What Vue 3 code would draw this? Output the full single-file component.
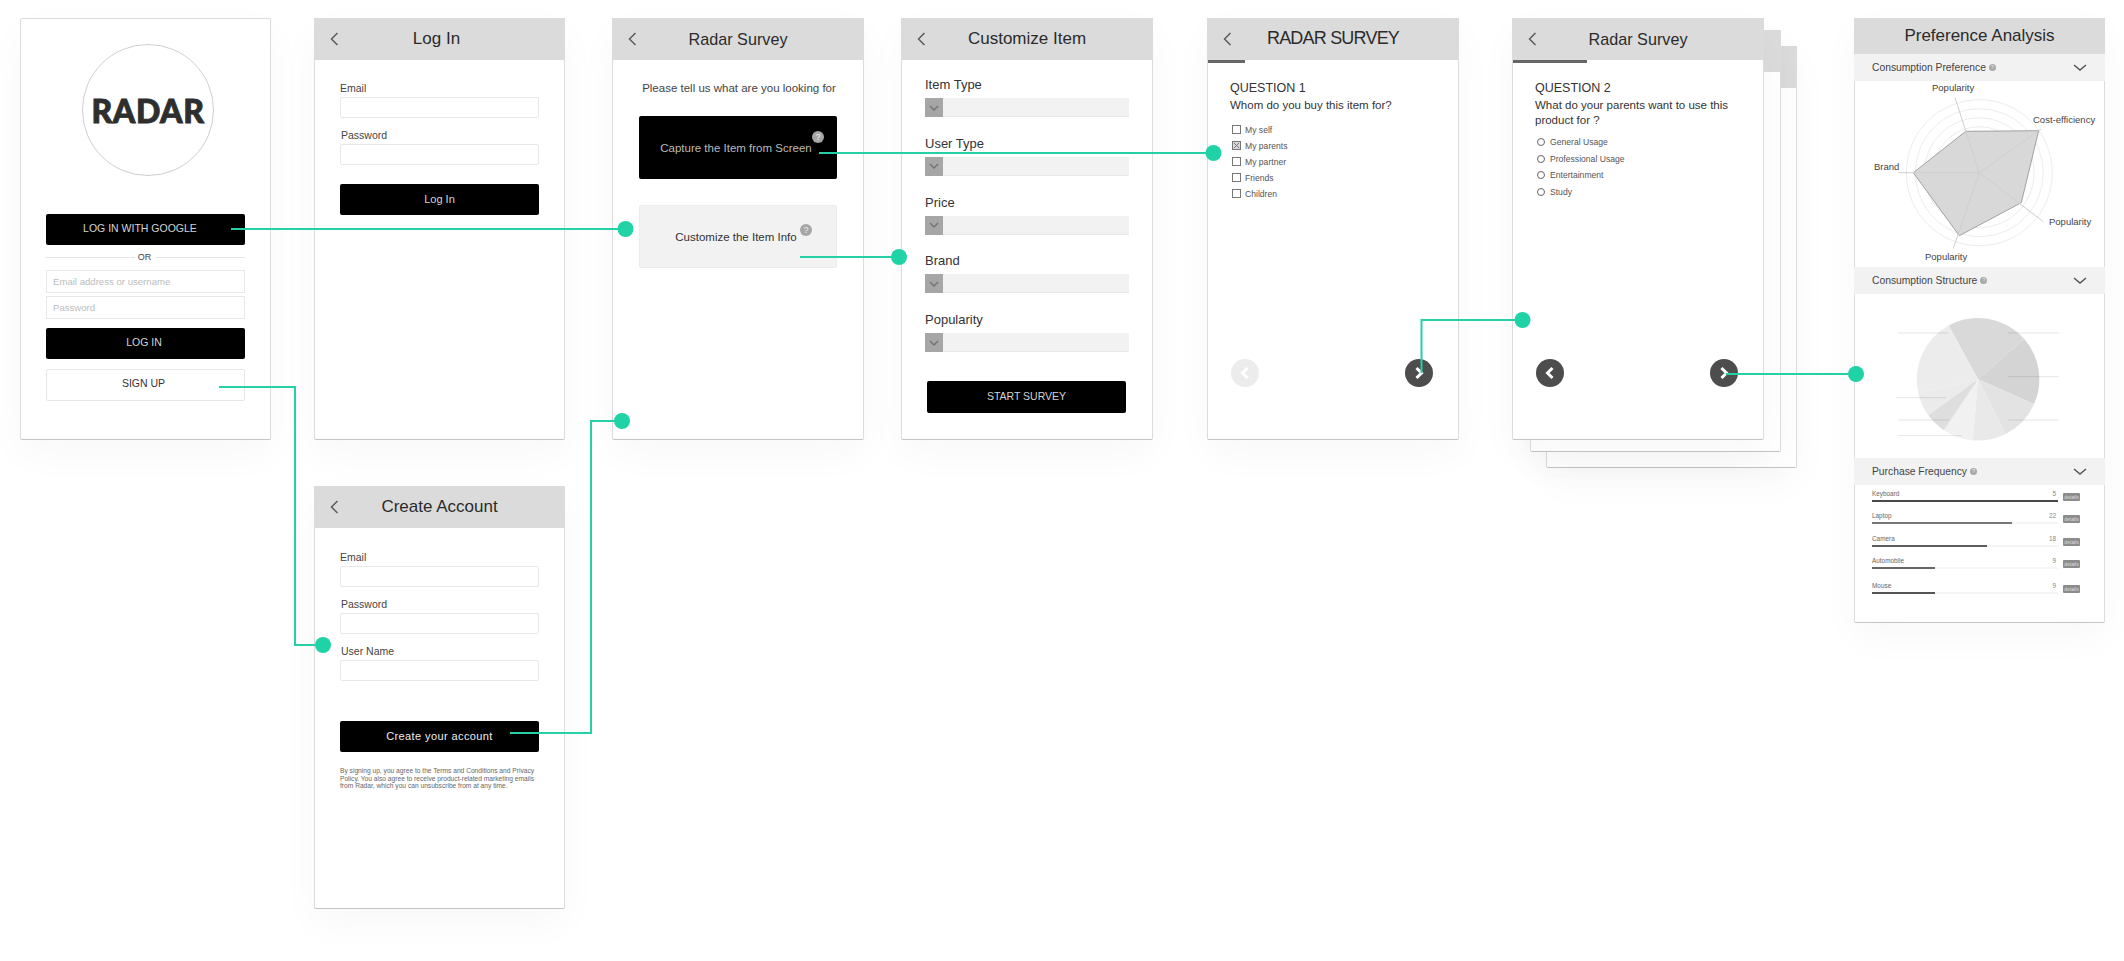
<template>
  <div class="board">
    <!-- login -->
    <section class="screen s-login">
      <div class="logo"><span>RADAR</span></div>
      <button class="btn black google">LOG IN WITH GOOGLE</button>
      <div class="or"><i></i><span>OR</span><i></i></div>
      <input class="plain" placeholder="Email address or username" />
      <input class="plain second" placeholder="Password" />
      <button class="btn black login">LOG IN</button>
      <button class="btn ghost">SIGN UP</button>
    </section>

    <!-- log in form -->
    <section class="screen s-form">
      <header class="head">
        <svg class="back" viewBox="0 0 9 14"><polyline points="7.5,1 1.5,7 7.5,13" /></svg>
        <h1 class="shift">Log In</h1>
      </header>
      <div class="form">
        <label class="lbl first">Email</label>
        <div class="box"></div>
        <label class="lbl">Password</label>
        <div class="box"></div>
        <button class="btn black submit">Log In</button>
      </div>
    </section>

    <!-- create account -->
    <section class="screen s-create">
      <header class="head">
        <svg class="back" viewBox="0 0 9 14"><polyline points="7.5,1 1.5,7 7.5,13" /></svg>
        <h1>Create Account</h1>
      </header>
      <div class="form">
        <label class="lbl first create-first">Email</label>
        <div class="box"></div>
        <label class="lbl">Password</label>
        <div class="box"></div>
        <label class="lbl">User Name</label>
        <div class="box"></div>
        <button class="btn black create">Create your account</button>
        <p class="terms">
          By signing up, you agree to the Terms and Conditions and Privacy<br />
          Policy. You also agree to receive product-related marketing emails<br />
          from Radar, which you can unsubscribe from at any time.
        </p>
      </div>
    </section>

    <!-- survey start -->
    <section class="screen s-survey">
      <header class="head">
        <svg class="back" viewBox="0 0 9 14"><polyline points="7.5,1 1.5,7 7.5,13" /></svg>
        <h1 class="narrow">Radar Survey</h1>
      </header>
      <div class="choose">
        <p class="intro">Please tell us what are you looking for</p>
        <div class="choice dark">
          <span>Capture the Item from Screen</span>
          <b class="hint h1">?</b>
        </div>
        <div class="choice light">
          <span>Customize the Item Info</span>
          <b class="hint h2">?</b>
        </div>
      </div>
    </section>

    <!-- customize -->
    <section class="screen s-custom">
      <header class="head">
        <svg class="back" viewBox="0 0 9 14"><polyline points="7.5,1 1.5,7 7.5,13" /></svg>
        <h1>Customize Item</h1>
      </header>
      <div class="selects">
        <div v-for="name in selects" :key="name" class="sel-field">
          <label>{{ name }}</label>
          <div class="sel">
            <span class="sel-arrow">
              <svg viewBox="0 0 10 6"><polyline points="1,1 5,5 9,1" /></svg>
            </span>
          </div>
        </div>
        <button class="btn black start">START SURVEY</button>
      </div>
    </section>

    <!-- question 1 -->
    <section class="screen s-q1">
      <header class="head">
        <svg class="back" viewBox="0 0 9 14"><polyline points="7.5,1 1.5,7 7.5,13" /></svg>
        <h1 class="caps">RADAR SURVEY</h1>
      </header>
      <div class="progress p1"></div>
      <div class="question">
        <h2>QUESTION 1</h2>
        <p>Whom do you buy this item for?</p>
        <ul class="opts checks">
          <li v-for="o in q1Options" :key="o.text">
            <span class="check">
              <svg v-if="o.on" viewBox="0 0 8 8"><path d="M1 1 7 7M7 1 1 7" /></svg>
            </span>
            {{ o.text }}
          </li>
        </ul>
        <div class="nav">
          <span class="round off"><svg viewBox="0 0 10 14"><polyline points="7.5,2 2.5,7 7.5,12" /></svg></span>
          <span class="round"><svg viewBox="0 0 10 14"><polyline points="2.5,2 7.5,7 2.5,12" /></svg></span>
        </div>
      </div>
    </section>

    <!-- question 2 with the stacked pages behind it -->
    <div class="sheet sheet-b"><div></div></div>
    <div class="sheet sheet-a"><div></div></div>
    <section class="screen s-q2">
      <header class="head">
        <svg class="back" viewBox="0 0 9 14"><polyline points="7.5,1 1.5,7 7.5,13" /></svg>
        <h1 class="narrow">Radar Survey</h1>
      </header>
      <div class="progress p2"></div>
      <div class="question">
        <h2>QUESTION 2</h2>
        <p>What do your parents want to use this product for ?</p>
        <ul class="opts radios">
          <li v-for="o in q2Options" :key="o"><span class="radio"></span>{{ o }}</li>
        </ul>
        <div class="nav">
          <span class="round"><svg viewBox="0 0 10 14"><polyline points="7.5,2 2.5,7 7.5,12" /></svg></span>
          <span class="round"><svg viewBox="0 0 10 14"><polyline points="2.5,2 7.5,7 2.5,12" /></svg></span>
        </div>
      </div>
    </section>

    <!-- analysis -->
    <section class="screen s-analysis">
      <header class="head tall"><h1>Preference Analysis</h1></header>

      <div class="sec-head">
        <span>Consumption Preference</span><b class="mini">?</b>
        <svg viewBox="0 0 14 7"><polyline points="1,1 7,6 13,1" /></svg>
      </div>
      <svg class="radar" width="249" height="186" viewBox="0 0 249 186">
        <circle v-for="r in rings" :key="r" cx="124.3" cy="91.7" :r="r" class="ring" />
        <polygon class="area" points="110.7,50.3 183.7,49.7 166.3,121.7 104.3,154.7 58.3,91.7" />
        <line v-for="(s, i) in spokes" :key="i" x1="124.3" y1="91.7" :x2="s[0]" :y2="s[1]" class="spoke" />
        <text x="77" y="10">Popularity</text>
        <text x="178" y="42">Cost-efficiency</text>
        <text x="19" y="89">Brand</text>
        <text x="194" y="144">Popularity</text>
        <text x="70" y="179">Popularity</text>
      </svg>

      <div class="sec-head">
        <span>Consumption Structure</span><b class="mini">?</b>
        <svg viewBox="0 0 14 7"><polyline points="1,1 7,6 13,1" /></svg>
      </div>
      <svg class="pie" width="249" height="164" viewBox="0 0 249 164">
        <path v-for="s in slices" :key="s.d" :d="s.d" :fill="s.fill" />
        <line v-for="(l, i) in leaders" :key="i" :x1="l[0]" :x2="l[1]" :y1="l[2]" :y2="l[2]" class="leader" />
      </svg>

      <div class="sec-head">
        <span>Purchase Frequency</span><b class="mini">?</b>
        <svg viewBox="0 0 14 7"><polyline points="1,1 7,6 13,1" /></svg>
      </div>
      <div class="bars">
        <div v-for="b in bars" :key="b.name" class="bar-row">
          <div class="bar-main">
            <div class="bar-text"><span>{{ b.name }}</span><span class="num">{{ b.value }}</span></div>
            <div class="track"><div class="fill" :style="{ width: b.pct + '%', background: b.color }"></div></div>
          </div>
          <span class="details">details</span>
        </div>
      </div>
    </section>

    <!-- flow connectors -->
    <svg class="links" width="2124" height="961" viewBox="0 0 2124 961">
      <polyline v-for="(p, i) in links" :key="i" :points="p" />
      <circle v-for="(d, i) in dots" :key="'d' + i" :cx="d[0]" :cy="d[1]" r="8" />
    </svg>
  </div>
</template>

<script setup>
const selects = ['Item Type', 'User Type', 'Price', 'Brand', 'Popularity'];

const q1Options = [
  { text: 'My self' },
  { text: 'My parents', on: true },
  { text: 'My partner' },
  { text: 'Friends' },
  { text: 'Children' }
];
const q2Options = ['General Usage', 'Professional Usage', 'Entertainment', 'Study'];

const rings = [73, 64, 55, 46, 36.5, 27.5, 18.5, 9];
const spokes = [[100, 16.7], [186, 48], [188.3, 140.7], [98.3, 167.3], [43.3, 91.7]];

// pie is drawn clockwise from 12 o'clock, angles read off the reference
const pieAngles = [-28.6, 49, 113.8, 153.2, 184.9, 213.9, 234.3, 256.9, 331.4];
const pieFills = ['#d9d9d9', '#d4d4d4', '#e3e3e3', '#e9e9e9', '#f1f1f1', '#dedede', '#ebebeb', '#ececec'];
const point = (deg) => {
  const a = (deg * Math.PI) / 180;
  return `${(123 + 61.3 * Math.sin(a)).toFixed(2)} ${(85.3 - 61.3 * Math.cos(a)).toFixed(2)}`;
};
const slices = pieFills.map((fill, i) => ({
  fill,
  d: `M123 85.3L${point(pieAngles[i])}A61.3 61.3 0 0 1 ${point(pieAngles[i + 1])}Z`
}));
const leaders = [
  [43.3, 93.3, 39], [153.3, 204, 39], [153.3, 204, 82.7], [153.3, 204, 126],
  [41, 91, 103.7], [43.3, 94, 126], [43.3, 107, 141.7]
];

const bars = [
  { name: 'Keyboard', value: 5, pct: 100, color: '#4a4a4a' },
  { name: 'Laptop', value: 22, pct: 75, color: '#777' },
  { name: 'Camera', value: 18, pct: 62, color: '#5c5c5c' },
  { name: 'Automobile', value: 9, pct: 34, color: '#666' },
  { name: 'Mouse', value: 9, pct: 34, color: '#555' }
];

const links = [
  '231,229 625,229',
  '219,387 295,387 295,645 323,645',
  '510,733 591,733 591,421 622,421',
  '819,153 1213,153',
  '800,257 899,257',
  '1421.5,373 1421.5,320 1522,320',
  '1726,374 1856,374'
];
const dots = [[625.5, 229], [323, 645], [622, 421], [1213.5, 153], [899, 257], [1522.5, 320], [1856, 374]];
</script>

<style scoped>
.board {
  position: relative;
  width: 2124px;
  height: 961px;
  overflow: hidden;
  background: #fff;
  font-family: 'Liberation Sans', Arial, sans-serif;
  color: #333;
}

/* artboards sit freely on the canvas */
.screen,
.sheet {
  position: absolute;
  box-sizing: border-box;
  background: #fff;
  border: 1px solid #dcdcdc;
  border-bottom-color: #c4c4c4;
  border-radius: 2px;
  box-shadow: 0 14px 40px rgba(0, 0, 0, 0.03);
}
.screen {
  display: flex;
  flex-direction: column;
  width: 252px;
  height: 422px;
  top: 18px;
}
.s-login { left: 20px; padding: 0 25px; width: 251px; }
.s-form { left: 314px; width: 251px; }
.s-create { left: 314px; top: 486px; width: 251px; height: 423px; }
.s-survey { left: 612px; }
.s-custom { left: 901px; }
.s-q1 { left: 1207px; }
.s-q2 { left: 1512px; }
.s-analysis { left: 1854px; width: 251px; height: 605px; }

.sheet { width: 251px; }
.sheet div { height: 42px; margin: -1px -1px 0; background: #dbdbdb; }
.sheet-a { left: 1530px; top: 30px; height: 422px; }
.sheet-b { left: 1546px; top: 46px; height: 422px; }

.head {
  display: grid;
  grid-template-columns: 1fr auto 1fr;
  align-items: center;
  flex: none;
  height: 42px;
  margin: -1px -1px 0;
  padding: 0 16px;
  background: #dbdbdb;
}
.head.tall { height: 36px; grid-template-columns: 1fr; justify-items: center; }
.head h1 {
  grid-column: 2;
  grid-row: 1;
  margin: 0;
  font-size: 17px;
  font-weight: 400;
  color: #2b2b2b;
}
.head.tall h1 { grid-column: 1; font-size: 17px; }
.head h1.narrow { font-size: 16.2px; }
.head h1.caps { font-size: 18px; letter-spacing: -0.8px; margin-top: -2px; }
.head h1.shift { transform: translateX(-3px); }
.back {
  grid-column: 1;
  grid-row: 1;
  width: 9px;
  height: 14px;
  fill: none;
  stroke: #5c5c5c;
  stroke-width: 1.5;
}

.btn {
  display: block;
  flex: none;
  box-sizing: border-box;
  width: 100%;
  border: 0;
  border-radius: 2px;
  padding: 0;
  font-family: inherit;
  font-size: 10.5px;
}
.btn.black { background: #000; color: #d4d4d4; }
.btn.ghost {
  height: 32px;
  margin-top: 10px;
  background: #fff;
  border: 1px solid #e6e6e6;
  color: #333;
  padding: 0 4px 4px 0;
}

/* login */
.logo {
  display: flex;
  align-items: center;
  justify-content: center;
  flex: none;
  box-sizing: border-box;
  width: 132px;
  height: 132px;
  margin: 25px 0 0 36px;
  border: 1px solid #cfcfcf;
  border-radius: 50%;
}
.logo span {
  font-family: Lato, 'Liberation Sans', sans-serif;
  font-weight: 900;
  font-size: 32px;
  letter-spacing: 0.6px;
  color: #2e2e2e;
  -webkit-text-stroke: 0.9px #2e2e2e;
}
.google { height: 31px; margin-top: 38px; padding-right: 11px; padding-bottom: 3px; }
.or {
  display: flex;
  align-items: center;
  flex: none;
  gap: 5px;
  height: 25px;
  font-size: 9px;
  color: #444;
}
.or i { flex: 1; height: 1px; background: #e4e4e4; }
.or span { margin-left: -2px; margin-top: -2px; }
.plain {
  flex: none;
  box-sizing: border-box;
  width: 100%;
  height: 23px;
  padding: 0 6px;
  border: 1px solid #e8e8e8;
  border-radius: 0;
  font-family: inherit;
  font-size: 9.6px;
  outline: none;
}
.plain::placeholder { color: #bdbdbd; }
.plain.second { margin-top: 3px; }
.login { height: 31px; margin-top: 9px; padding-bottom: 4px; padding-right: 3px; }

/* shared forms */
.form { padding: 0 25px; }
.lbl {
  display: block;
  margin-top: 11px;
  padding-left: 1px;
  padding-bottom: 2px;
  font-size: 10.5px;
  line-height: 13px;
  color: #444;
}
.lbl.first { margin-top: 22px; padding-left: 0; }
.lbl.create-first { margin-top: 23px; }
.box {
  box-sizing: border-box;
  height: 21px;
  border: 1px solid #e8e8e8;
  border-radius: 2px;
}
.submit { height: 31px; margin-top: 19px; font-size: 11px; padding-bottom: 2px; }
.btn.black.create {
  height: 31px;
  margin-top: 40px;
  font-size: 11px;
  letter-spacing: 0.4px;
  padding-bottom: 2px;
  color: #eee;
}
.terms {
  margin: 15px 0 0;
  font-size: 6.65px;
  line-height: 7.5px;
  color: #666;
  white-space: nowrap;
}

/* survey start */
.choose { display: flex; flex-direction: column; padding: 0 26px; }
.intro {
  margin: 21px 0 0;
  padding-left: 2px;
  font-size: 11.5px;
  line-height: 14px;
  text-align: center;
  color: #444;
  white-space: nowrap;
}
.choice {
  position: relative;
  display: flex;
  align-items: center;
  justify-content: center;
  height: 63px;
  border-radius: 2px;
  font-size: 11.5px;
  padding-right: 4px;
  white-space: nowrap;
}
.choice.dark { margin-top: 21px; background: #000; color: #bbb; }
.choice.light { margin-top: 26px; background: #f2f2f2; color: #333; border: 1px solid #ececec; box-sizing: border-box; }
.hint {
  position: absolute;
  width: 12px;
  height: 12px;
  border-radius: 50%;
  background: #a6a6a6;
  color: #eee;
  font-size: 9px;
  font-weight: 400;
  line-height: 12px;
  text-align: center;
}
.h1 { left: 173px; top: 15px; }
.h2 { left: 160px; top: 18px; }

/* customize */
.selects { padding: 0 23px; }
.sel-field { margin-top: 18.8px; }
.sel-field:first-child { margin-top: 17px; }
.sel-field label {
  display: block;
  margin-bottom: 5px;
  font-size: 13px;
  line-height: 16px;
  color: #333;
}
.sel { height: 19px; background: #f2f2f2; border-bottom: 1px solid #e8e8e8; box-sizing: border-box; }
.sel-arrow {
  display: flex;
  align-items: center;
  justify-content: center;
  width: 18px;
  height: 19px;
  background: #a6a6a6;
}
.sel-arrow svg { width: 10px; height: 6px; fill: none; stroke: #707070; stroke-width: 1.3; }
.start { width: 199px; height: 32px; margin: 29px 0 0 2px; padding-bottom: 2px; }

/* questions */
.progress { flex: none; height: 2.5px; background: #666; }
.p1 { width: 37px; }
.p2 { width: 74px; }
.question {
  display: flex;
  flex-direction: column;
  flex: 1;
  padding: 17.5px 25px 52px 22px;
}
.question h2 {
  margin: 0 0 2px;
  font-size: 12.5px;
  font-weight: 400;
  line-height: 16px;
  color: #333;
}
.question p {
  margin: 0;
  font-size: 11.5px;
  line-height: 14.5px;
  color: #333;
}
.opts {
  margin: 9px 0 0;
  padding: 0;
  list-style: none;
  font-size: 8.6px;
  color: #555;
}
.opts li { display: flex; align-items: center; gap: 4px; height: 16px; }
.radios { margin-top: 7px; }
.radios li { height: 16.6px; gap: 5px; padding-left: 2px; }
.check {
  box-sizing: border-box;
  width: 9px;
  height: 9px;
  margin-left: 2px;
  border: 1px solid #777;
  background: #fff;
}
.check svg { display: block; width: 7px; height: 7px; fill: none; stroke: #666; stroke-width: 1; }
.check:has(svg) { background: #d9d9d9; }
.radio {
  box-sizing: border-box;
  width: 8px;
  height: 8px;
  border: 1px solid #666;
  border-radius: 50%;
}
.nav {
  display: flex;
  justify-content: space-between;
  margin-top: auto;
  padding-left: 1px;
}
.round {
  display: flex;
  align-items: center;
  justify-content: center;
  width: 28px;
  height: 28px;
  border-radius: 50%;
  background: #4d4d4d;
}
.round.off { background: #ececec; }
.round svg { width: 10px; height: 14px; fill: none; stroke: #fff; stroke-width: 3; }

/* analysis */
.s-analysis .head { padding: 0; }
.sec-head {
  display: flex;
  align-items: center;
  flex: none;
  height: 27px;
  margin: 0 -1px;
  padding: 0 18px;
  background: #f2f2f2;
  font-size: 10.3px;
  color: #444;
}
.sec-head svg {
  width: 14px;
  height: 7px;
  margin-left: auto;
  fill: none;
  stroke: #555;
  stroke-width: 1.5;
}
.mini {
  width: 7px;
  height: 7px;
  margin-left: 3px;
  border-radius: 50%;
  background: #a8a8a8;
  color: #eee;
  font-size: 5px;
  font-weight: 400;
  line-height: 7px;
  text-align: center;
}
.radar,
.pie { display: block; flex: none; }
.ring { fill: none; stroke: #ededed; stroke-width: 1; }
.area { fill: #d8d8d8; stroke: #8f8f8f; stroke-width: 0.8; }
.spoke { stroke: #cfcfcf; stroke-width: 1; }
.radar text { font-size: 9.5px; fill: #444; }
.leader { stroke: rgba(0, 0, 0, 0.1); stroke-width: 1; }

.bars { padding: 4px 0 0 17px; }
.bar-row {
  display: flex;
  align-items: flex-end;
  gap: 5px;
  height: 13px;
  margin-bottom: 9.4px;
}
.bar-row:last-child { margin-top: 12px; }
.bar-main { width: 186px; }
.bar-text {
  display: flex;
  justify-content: space-between;
  padding-right: 2px;
  font-size: 6.4px;
  line-height: 10px;
  margin-bottom: 1px;
  color: #666;
}
.bar-text .num { color: #888; }
.track { height: 2px; background: #f5f5f5; }
.fill { height: 100%; }
.details {
  width: 17px;
  height: 8px;
  margin-bottom: 1px;
  border-radius: 1px;
  background: #8c8c8c;
  color: #ddd;
  font-size: 5px;
  line-height: 8px;
  text-align: center;
}

/* connectors stay above every artboard */
.links { position: absolute; left: 0; top: 0; pointer-events: none; }
.links polyline { fill: none; stroke: #25d0a6; stroke-width: 2; }
.links circle { fill: #1fd3a7; }
</style>
